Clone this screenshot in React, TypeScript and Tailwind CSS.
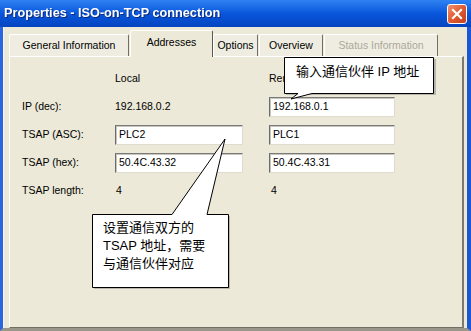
const tabs = [
  { label: 'General Information', w: 'w-[120px]' },
  { label: 'Addresses', w: 'w-[83px]', active: true },
  { label: 'Options', w: 'w-[45px]' },
  { label: 'Overview', w: 'w-[64px]' },
  { label: 'Status Information', w: 'w-[114px]', disabled: true },
];

function Field({ value, w }: { value: string; w: string }) {
  return (
    <div
      className={`${w} h-[20px] flex items-center pl-[3px] bg-white border border-t-[#7a7a7a] border-l-[#6c6c6c] border-r-[#dedcd0] border-b-[#dedcd0] shadow-[inset_1px_1px_0_#c8c6bc]`}
    >
      {value}
    </div>
  );
}

function Callouts() {
  return (
    <>
      <svg className="absolute left-0 top-0 pointer-events-none" width={471} height={331}>
        {/* shadows */}
        <polygon points="286,59 436,59 436,95 286,95" fill="#b9b7ad" />
        <polygon points="94,216 230,216 230,289 94,289" fill="#b9b7ad" />
        {/* top callout */}
        <polygon
          points="284.5,57.5 433.5,57.5 433.5,93.5 312,93.5 291,99 298,93.5 284.5,93.5"
          fill="#fff"
          stroke="#000"
          strokeWidth={1}
        />
        {/* bottom callout */}
        <polygon
          points="92.5,214.5 172,214.5 225,139 207,214.5 228.5,214.5 228.5,287.5 92.5,287.5"
          fill="#fff"
          stroke="#000"
          strokeWidth={1}
        />
      </svg>
      <div className="absolute left-[296px] top-[63px] text-[13px] leading-[18px] text-black font-['Liberation_Sans','Noto_Sans_CJK_SC',sans-serif]">
        输入通信伙伴 IP 地址
      </div>
      <div className="absolute left-[103px] top-[219px] text-[13px] leading-[18px] text-black font-['Liberation_Sans','Noto_Sans_CJK_SC',sans-serif]">
        <div>设置通信双方的</div>
        <div>TSAP 地址，需要</div>
        <div>与通信伙伴对应</div>
      </div>
    </>
  );
}

export default function App() {
  return (
    <div className="relative w-[471px] h-[331px] overflow-hidden bg-[#ece9d8] flex flex-col font-['Liberation_Sans',Arial,sans-serif] text-[10.5px] text-black">
      {/* title bar */}
      <div className="h-[27px] shrink-0 flex items-center justify-between pl-[4px] pr-[4px] bg-gradient-to-b from-[#2f82f2] via-[#0856dc] to-[#0644c0]">
        <span className="text-white font-bold text-[12.7px] drop-shadow-[1px_1px_0_#0a2a80]">
          Properties - ISO-on-TCP connection
        </span>
        <div className="w-[20px] h-[20px] mt-[1px] rounded-[3px] border border-white bg-gradient-to-br from-[#f0906c] via-[#e05a30] to-[#c4401e] flex items-center justify-center">
          <svg width="12" height="12" viewBox="0 0 12 12">
            <path d="M2 2 L10 10 M10 2 L2 10" stroke="#fff" strokeWidth="2.2" strokeLinecap="square" />
          </svg>
        </div>
      </div>

      {/* window body */}
      <div className="flex-1 flex flex-col border-l-[3px] border-r-[4px] border-l-[#2a66e0] border-r-[#1c56d8] border-b-[3px] border-b-[#9a978a]">
        <div className="flex-1 flex flex-col pl-[5px] pr-[3px] pt-[3px] border-l border-l-[#f8f6ee]">
          {/* tabs */}
          <div className="flex items-end h-[26px] shrink-0">
            {tabs.map((t) =>
              t.active ? (
                <div
                  key={t.label}
                  className={`${t.w} h-[27px] -mb-px relative z-10 flex items-center justify-center pb-[2px] bg-[#ece9d8] border-t border-l border-white border-r border-r-[#5a584e] rounded-t-[2px]`}
                >
                  {t.label}
                </div>
              ) : (
                <div
                  key={t.label}
                  className={`${t.w} h-[22px] mr-px flex items-center justify-center bg-[#efede2] border-t border-l border-white border-r border-r-[#716f64] rounded-t-[2px] ${t.disabled ? 'text-[#aca899]' : ''}`}
                >
                  {t.label}
                </div>
              ),
            )}
          </div>

          {/* panel */}
          <div className="flex-1 border-t border-l border-white border-r-2 border-r-[#7d7b70] border-b border-b-[#716f64]">
            <div className="grid grid-cols-[93px_154px_130px] auto-rows-[20px] gap-y-[8px] items-center pl-[12px] pt-[12px]">
              <div />
              <div>Local</div>
              <div>Remote</div>

              <div>IP (dec):</div>
              <div>192.168.0.2</div>
              <Field value="192.168.0.1" w="w-[126px]" />

              <div>TSAP (ASC):</div>
              <Field value="PLC2" w="w-[128px]" />
              <Field value="PLC1" w="w-[126px]" />

              <div>TSAP (hex):</div>
              <Field value="50.4C.43.32" w="w-[128px]" />
              <Field value="50.4C.43.31" w="w-[126px]" />

              <div>TSAP length:</div>
              <div className="pl-[1px]">4</div>
              <div className="pl-[2px]">4</div>
            </div>
          </div>
        </div>
      </div>

      <Callouts />
    </div>
  );
}
